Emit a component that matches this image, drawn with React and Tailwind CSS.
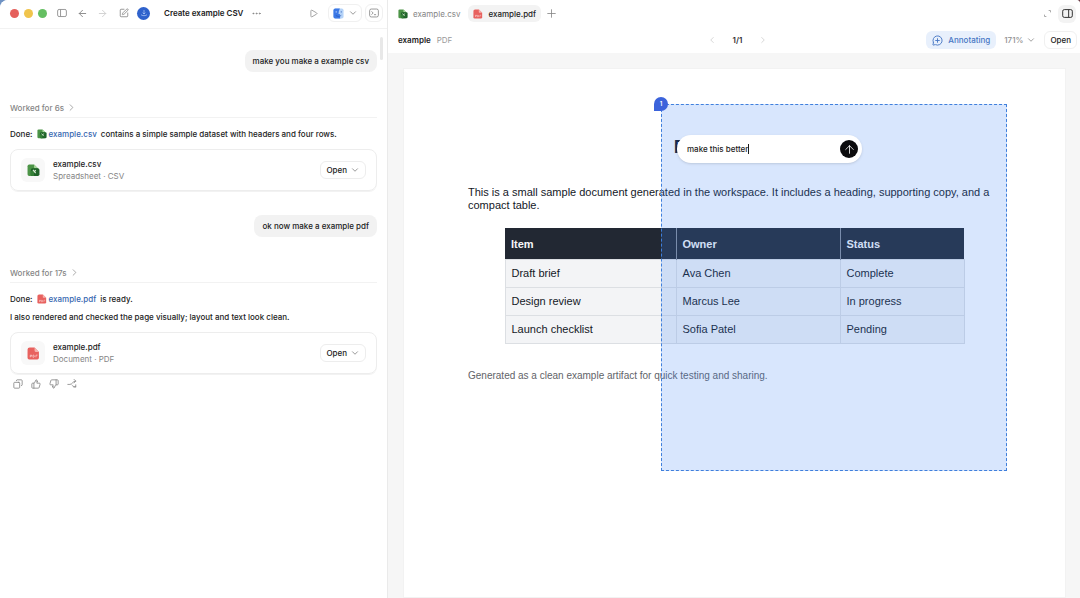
import { useState } from 'react';
import {
  ArrowLeft, ArrowRight, ArrowUp, ChevronDown, ChevronLeft, ChevronRight, Copy, Ellipsis,
  MessageCirclePlus, Play, Plus, SquarePen, ThumbsDown, ThumbsUp,
} from 'lucide-react';

const ROWS = [
  ['Draft brief', 'Ava Chen', 'Complete'],
  ['Design review', 'Marcus Lee', 'In progress'],
  ['Launch checklist', 'Sofia Patel', 'Pending'],
];

function CsvIcon({ size = 10 }) {
  return (
    <svg width={size} height={size} viewBox="0 0 24 24" className="shrink-0">
      <path d="M4 1h9l7 7v12a2 2 0 0 1-2 2H4a3 3 0 0 1-3-3V4a3 3 0 0 1 3-3z" fill="#4c9447" />
      <path d="M13 1l7 7h-5a2 2 0 0 1-2-2z" fill="#a9d59c" />
      <rect x="7" y="8" width="16" height="14" rx="3" fill="#1f6329" />
      <path d="M7 13h6v9H9a2 2 0 0 1-2-2z" fill="#347f37" />
      <path d="M11 11l5 6M16 11l-2 3" stroke="#dff0da" strokeWidth="2" />
    </svg>
  );
}

function PdfIcon({ size = 10 }) {
  return (
    <svg width={size} height={size} viewBox="0 0 24 24" className="shrink-0">
      <path d="M5 1h9l8 8v11a3 3 0 0 1-3 3H4a3 3 0 0 1-3-3V5a4 4 0 0 1 4-4z" fill="#e8615e" />
      <path d="M14 1l8 8h-6a2 2 0 0 1-2-2z" fill="#f5b3ae" />
      <path d="M6 19v-4h2.500v2H6M11 15v4h1c2 0 2-4 0-4zM16.500 19v-4h3" stroke="#fbdcda" strokeWidth="1.200" fill="none" />
    </svg>
  );
}

// landscape window outline with a side divider
function PanelIcon({ side = 'left', size = 10 }) {
  return (
    <svg width={size} height={size} viewBox="0 0 24 24" fill="none" stroke="currentColor" strokeWidth="2">
      <rect x="1.500" y="3.500" width="21" height="17" rx="3.500" />
      <path d={side === 'left' ? 'M8.500 4v16' : 'M14.500 4v16'} />
    </svg>
  );
}

function ShareIcon() {
  return (
    <svg width="10" height="10" viewBox="0 0 24 24" fill="none" stroke="currentColor" strokeWidth="2" strokeLinecap="round" strokeLinejoin="round">
      <path d="M2 13h5c6 0 6-8 14-8M12 15c2 2 4 4 9 4M17 1l4 4-4 4M21 14v5h-5" />
    </svg>
  );
}

function FinderIcon() {
  return (
    <svg width="11" height="11" viewBox="0 0 24 24">
      <rect x="1" y="1" width="22" height="22" rx="4" fill="#b5d3f8" />
      <path d="M5 1h10c-2 4-3 8-3 12h3c0 4 0 7 1 10H5a4 4 0 0 1-4-4V5a4 4 0 0 1 4-4z" fill="#3b78e6" />
      <path d="M6 16c3 3 9 3 12 0M18 7v3" stroke="#2456b5" strokeWidth="1.500" fill="none" />
      <path d="M7 7v3" stroke="#fff" strokeWidth="1.500" />
    </svg>
  );
}

function UserBubble({ children }) {
  return (
    <div className="self-end rounded-lg bg-[#f2f2f2] px-2 py-[3px] text-[#1c1c1c]">{children}</div>
  );
}

function WorkedFor({ time }) {
  return (
    <button className="mt-[26px] flex h-5 w-full items-center gap-[2px] border-b border-[#f2f2f2] text-[#858585]">
      Worked for {time} <ChevronRight size={11} strokeWidth={1.5} />
    </button>
  );
}

function FileCard({ icon, name, kind }) {
  return (
    <div className="mt-[7px] flex h-[42px] items-center rounded-lg border border-[#ededed] pr-[10px] pl-[10px] shadow-2xs">
      <div className="flex size-6 items-center justify-center rounded-md bg-[#f8f8f8]">{icon}</div>
      <div className="ml-2 flex-1 leading-3">
        <p className="text-[#1c1c1c]">{name}</p>
        <p className="font-normal text-[#858585]">{kind}</p>
      </div>
      <button className="flex h-[18px] items-center gap-[3px] rounded-md border border-[#ededed] px-[5px]">
        Open <ChevronDown size={10} className="text-[#858585]" />
      </button>
    </div>
  );
}

function ChatPanel() {
  return (
    <section className="flex min-w-0 flex-col border-r border-[#eaeaea] bg-white">
      <header className="flex h-[29px] shrink-0 items-center border-b border-[#f2f2f2] pb-[2px] pr-1 pl-[10px] text-[#858585]">
        <div className="flex gap-[5px]">
          <span className="size-[9px] rounded-full bg-[#e5605c]" />
          <span className="size-[9px] rounded-full bg-[#f0c44c]" />
          <span className="size-[9px] rounded-full bg-[#65bf62]" />
        </div>
        <button aria-label="Toggle sidebar" className="ml-[10px]"><PanelIcon /></button>
        <button aria-label="Back" className="ml-[10px]"><ArrowLeft size={11} /></button>
        <button aria-label="Forward" className="ml-[9px] text-[#cfcfcf]"><ArrowRight size={11} /></button>
        <button aria-label="New chat" className="ml-[11px]"><SquarePen size={10} /></button>
        <button aria-label="Download update" className="ml-2 flex size-[13px] items-center justify-center rounded-full bg-[#2f62cc] text-[#bcd2fa]">
          <svg width="8" height="8" viewBox="0 0 24 24" fill="none" stroke="currentColor" strokeWidth="2">
            <path d="M12 3v12M8 11l4 4 4-4M3 17c2 4 16 4 18 0" />
          </svg>
        </button>
        <h1 className="ml-[14px] font-semibold text-[#222]">Create example CSV</h1>
        <button aria-label="More" className="ml-2"><Ellipsis size={11} /></button>
        <button aria-label="Run" className="ml-auto"><Play size={9} /></button>
        <button aria-label="Open in Finder" className="ml-[10px] flex h-[18px] w-[34px] items-center justify-center gap-1 rounded-md border border-[#f0f0f0]">
          <FinderIcon /> <ChevronDown size={10} />
        </button>
        <button aria-label="Terminal" className="ml-[3px] flex size-[18px] items-center justify-center rounded-md border border-[#f0f0f0]">
          <svg width="10" height="10" viewBox="0 0 24 24" fill="none" stroke="currentColor" strokeWidth="2">
            <rect x="1.500" y="2.500" width="21" height="19" rx="4" />
            <path d="M6 8l4 4-4 4M12 16h5" />
          </svg>
        </button>
      </header>

      <div className="relative flex flex-1 flex-col pt-[21px] pr-[10px] pl-[10px] font-medium">
        <div className="absolute top-2 right-1 h-[23px] w-[3px] rounded-full bg-[#e8e8e8]" />
        <UserBubble>make you make a example csv</UserBubble>
        <WorkedFor time="6s" />
        <p className="mt-2 flex items-center">
          Done: <a href="#csv" className="mx-1 flex items-center gap-[2px] text-[#3566b0]"><CsvIcon /> example.csv</a>
          contains a simple sample dataset with headers and four rows.
        </p>
        <FileCard icon={<CsvIcon size={13} />} name="example.csv" kind="Spreadsheet · CSV" />
        <div className="h-6" />
        <UserBubble>ok now make a example pdf</UserBubble>
        <WorkedFor time="17s" />
        <p className="mt-2 flex items-center">
          Done: <a href="#pdf" className="mx-1 flex items-center gap-[2px] text-[#3566b0]"><PdfIcon /> example.pdf</a>
          is ready.
        </p>
        <p className="mt-[2px]">I also rendered and checked the page visually; layout and text look clean.</p>
        <FileCard icon={<PdfIcon size={13} />} name="example.pdf" kind="Document · PDF" />
        <div className="mt-[5px] flex gap-2 pl-[3px] text-[#858585]">
          <button aria-label="Copy"><Copy size={10} className="-scale-x-100" /></button>
          <button aria-label="Good response"><ThumbsUp size={10} /></button>
          <button aria-label="Bad response"><ThumbsDown size={10} /></button>
          <button aria-label="Share"><ShareIcon /></button>
        </div>
      </div>
    </section>
  );
}

function Annotation() {
  const [note, setNote] = useState('make this better');
  return (
    <div className="absolute top-[35px] left-[257px] h-[367px] w-[346px] border border-dashed border-[#3f7fdc] bg-[#3b82f6]/20">
      <span className="absolute -top-2 -left-2 flex size-[14px] items-center justify-center rounded-full rounded-bl-sm bg-[#3b63db] text-[6px] font-semibold text-white">1</span>
      <form className="absolute top-[30px] left-[15px] flex h-7 w-[185px] items-center rounded-full bg-white pr-1 pl-[10px] shadow-sm" onSubmit={e => e.preventDefault()}>
        <label htmlFor="note" className="sr-only">Annotation</label>
        <div className="flex flex-1 items-center">
          <input id="note" value={note} onChange={e => setNote(e.target.value)}
            className="field-sizing-content bg-transparent font-medium text-[#1c1c1c] outline-none" />
          <span className="h-[10px] w-px bg-[#1c1c1c]" />
        </div>
        <button aria-label="Send" className="flex size-[18px] items-center justify-center rounded-full bg-[#0b0b0d] text-white">
          <ArrowUp size={13} strokeWidth={1.5} />
        </button>
      </form>
    </div>
  );
}

function PdfPage() {
  return (
    <article className="relative flex-1 border border-[#f2f2f2] bg-white px-16 pt-[66px] font-['Liberation_Sans',Arial,sans-serif] text-[11px] leading-[13px] text-[#14181f]">
      <h2 className="text-center text-[19px] leading-6 font-bold text-[#111827]">Example PDF</h2>
      <p className="mt-[27px]">
        This is a small sample document generated in the workspace. It includes a heading, supporting copy, and a compact table.
      </p>
      <table className="mx-auto mt-4 w-[460px] max-w-full table-fixed border-collapse text-left">
        <thead>
          <tr className="h-[31px] bg-[#222833] text-[#f5f6f8]">
            <th className="w-[171px] border-r border-[#8a909a] px-[6px] pt-[2px]">Item</th>
            <th className="w-[164px] border-r border-[#8a909a] px-[6px] pt-[2px]">Owner</th>
            <th className="px-[6px] pt-[2px]">Status</th>
          </tr>
        </thead>
        <tbody>
          {ROWS.map(row => (
            <tr key={row[0]} className="h-7 bg-[#f3f4f6]">
              {row.map(cell => (
                <td key={cell} className="border border-[#dcdfe3] px-[6px]">{cell}</td>
              ))}
            </tr>
          ))}
        </tbody>
      </table>
      <p className="mt-[25px] text-[10px] text-[#5f6368]">Generated as a clean example artifact for quick testing and sharing.</p>
      <div className="font-[Inter,sans-serif] text-[8px] leading-4"><Annotation /></div>
    </article>
  );
}

function PreviewPanel() {
  return (
    <section className="flex min-w-0 flex-col bg-white">
      <div className="flex h-[27px] shrink-0 items-center pr-1 pl-[10px]">
        <button className="flex items-center gap-[5px] text-[#858585]"><CsvIcon /> example.csv</button>
        <button className="ml-2 flex h-[17px] items-center gap-[5px] rounded-md bg-[#f3f3f3] px-[5px] font-medium text-[#222]"><PdfIcon /> example.pdf</button>
        <button aria-label="New tab" className="ml-1 text-[#858585]"><Plus size={13} strokeWidth={1.5} /></button>
        <button aria-label="Expand" className="ml-auto text-[#a5a5a5]">
          <svg width="9" height="9" viewBox="0 0 24 24" fill="none" stroke="currentColor" strokeWidth="2.500">
            <path d="M15 4h5v5M4 15v5h5" />
          </svg>
        </button>
        <button aria-label="Toggle preview" className="ml-[6px] flex size-[18px] items-center justify-center rounded-md bg-[#f3f3f3] text-[#222]"><PanelIcon side="right" size={11} /></button>
      </div>

      <div className="grid h-[26px] shrink-0 grid-cols-[1fr_auto_1fr] items-center pr-[3px] pl-[10px]">
        <div className="flex gap-[6px]">
          <span className="font-semibold">example</span>
          <span className="text-[#9a9a9a]">PDF</span>
        </div>
        <div className="flex items-center gap-4 text-[#cfcfcf]">
          <button aria-label="Previous page"><ChevronLeft size={10} /></button>
          <span className="font-semibold text-[#333]">1/1</span>
          <button aria-label="Next page"><ChevronRight size={10} /></button>
        </div>
        <div className="flex items-center justify-end">
          <button className="flex h-[18px] items-center gap-[5px] rounded-md bg-[#e8f0fc] px-[6px] font-medium text-[#4676c4]">
            <MessageCirclePlus size={11} /> Annotating
          </button>
          <button className="ml-2 flex items-center gap-[3px] font-medium text-[#8f8f8f]">171% <ChevronDown size={10} /></button>
          <button className="ml-2 h-[18px] rounded-md border border-[#f0f0f0] px-[5px] font-medium">Open</button>
        </div>
      </div>

      <div className="flex flex-1 bg-[#f6f6f6] pt-[15px] pr-[14px] pl-[15px]">
        <PdfPage />
      </div>
    </section>
  );
}

export default function App() {
  return (
    <div className="h-screen overflow-hidden bg-linear-to-r from-[#6f93c4] to-[#6b3a44]">
      <main className="grid h-full grid-cols-[97fr_173fr] overflow-hidden rounded-tl-lg rounded-tr-sm bg-white font-[Inter,sans-serif] text-[8px] leading-4 text-[#222]">
        <ChatPanel />
        <PreviewPanel />
      </main>
    </div>
  );
}
